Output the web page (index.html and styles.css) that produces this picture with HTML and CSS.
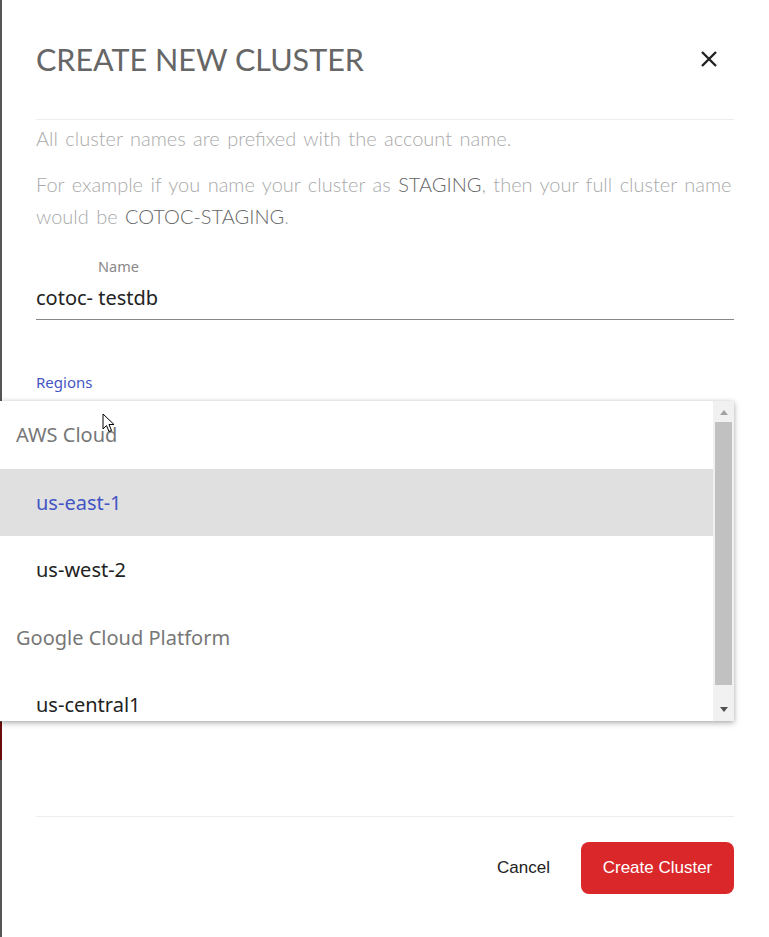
FILE: index.html
```html
<!DOCTYPE html>
<html lang="en">

<head>
    <meta charset="UTF-8">
    <meta name="viewport" content="width=device-width, initial-scale=1.0">
    <title>Create new cluster</title>
    <link rel="stylesheet" href="styles.css">
</head>

<body>
    <div class="modal">
        <!-- header -->
        <div class="modal-head">
            <h1 class="modal-title">CREATE NEW CLUSTER</h1>
            <span class="close">
                <svg width="18" height="18" viewBox="0 0 18 18">
                    <path d="M2 2 L16 16 M16 2 L2 16" stroke="#222" stroke-width="2.4" />
                </svg>
            </span>
        </div>

        <div class="intro">
            <p>All cluster names are prefixed with the account name.</p>
            <p>For example if you name your cluster as <span class="dark">STAGING</span>, then your full cluster name would be <span class="dark">COTOC-STAGING</span>.</p>
        </div>

        <div class="field">
            <label class="field-label">Name</label>
            <div class="field-value">cotoc- testdb</div>
        </div>

        <div class="regions">
            <label class="regions-label">Regions</label>
        </div>

        <div class="modal-foot">
            <button class="btn-cancel">Cancel</button>
            <button class="btn-create">Create Cluster</button>
        </div>
    </div>

    <!-- open region menu -->
    <div class="menu">
        <div class="menu-list">
            <div class="menu-group">AWS Cloud</div>
            <div class="menu-item selected">us-east-1</div>
            <div class="menu-item">us-west-2</div>
            <div class="menu-group">Google Cloud Platform</div>
            <div class="menu-item">us-central1</div>
        </div>
        <div class="scrollbar">
            <span class="arrow-up"></span>
            <span class="thumb"></span>
            <span class="arrow-down"></span>
        </div>
    </div>

    <svg class="cursor" width="13" height="20" viewBox="0 0 13 20">
        <path d="M1 1 L1 16 L4.5 12.5 L7 18.5 L9.5 17.5 L7 11.5 L12 11.5 Z" fill="#fff" stroke="#000" stroke-width="1" stroke-linejoin="round" />
    </svg>
</body>

</html>
```

FILE: styles.css
```css
* {
    margin: 0;
    padding: 0;
    box-sizing: border-box;
}

html {
    background: linear-gradient(to bottom, #555 0, #555 722px, #6b0d0d 722px, #6b0d0d 760px, #555 760px) no-repeat 0 0 / 2px 100%;
    background-color: #555;
    overflow: hidden;
}

body {
    margin-left: 2px;
    height: 937px;
    background-color: #fff;
    font-family: "Lato", "Noto Sans", sans-serif;
}

.modal {
    padding: 0 35px 0 34px;
}

.modal-head {
    height: 120px;
    display: flex;
    align-items: center;
    justify-content: space-between;
    border-bottom: 1px solid #eee;
    padding-bottom: 2px;
}

.modal-title {
    font-weight: 400;
    font-size: 30.5px;
    color: #666;
}

.close {
    display: flex;
    margin-right: 16px;
    cursor: pointer;
}

.intro {
    padding-top: 2px;
    color: #aaa;
    font-weight: 300;
    font-size: 20px;
    line-height: 32px;
    word-spacing: 2px;
}

.intro p {
    margin-bottom: 14px;
}

.intro .dark {
    color: #666;
}

.field {
    margin-top: 25px;
    border-bottom: 1px solid #888;
    padding-bottom: 6px;
}

.field-label {
    display: block;
    padding-left: 62px;
    font-family: "Noto Sans", sans-serif;
    font-size: 14.5px;
    color: #888;
    line-height: 18px;
}

.field-value {
    font-family: "Noto Sans", sans-serif;
    font-size: 20px;
    color: #222;
    line-height: 30px;
    margin-top: 8px;
}

.regions {
    margin-top: 52px;
    height: 444px;
}

.regions-label {
    font-family: "Noto Sans", sans-serif;
    font-size: 15px;
    color: #4355c5;
}

.modal-foot {
    border-top: 1px solid #eee;
    display: flex;
    justify-content: flex-end;
    align-items: center;
    gap: 31px;
    padding-top: 25px;
}

.modal-foot button {
    font-family: "Liberation Sans", Arial, sans-serif;
    font-size: 17px;
    border: none;
    cursor: pointer;
}

.btn-cancel {
    background: none;
    color: #222;
}

.btn-create {
    background-color: #d9272a;
    color: #fff;
    width: 153px;
    height: 52px;
    border-radius: 8px;
}

/* dropdown */
.menu {
    position: absolute;
    left: 0;
    top: 401px;
    width: 734px;
    height: 320px;
    background-color: #fff;
    box-shadow: 0 2px 6px rgba(0, 0, 0, 0.3), 0 0 4px rgba(0, 0, 0, 0.08);
    display: flex;
    overflow: hidden;
}

.menu-list {
    flex: 1;
    font-family: "Noto Sans", sans-serif;
    font-size: 20px;
}

.menu-group,
.menu-item {
    height: 67.5px;
    display: flex;
    align-items: center;
}

.menu-group {
    padding-left: 16px;
    color: #777;
}

.menu-item {
    padding-left: 36px;
    color: #222;
}

.menu-item.selected {
    background-color: #e0e0e0;
    color: #4355c5;
}

.scrollbar {
    width: 21px;
    background-color: #f1f1f1;
    display: flex;
    flex-direction: column;
    align-items: center;
    padding: 0 2px;
}

.thumb {
    width: 17px;
    height: 263px;
    background-color: #c1c1c1;
}

.arrow-up,
.arrow-down {
    width: 0;
    height: 0;
    border-left: 4px solid transparent;
    border-right: 4px solid transparent;
}

.arrow-up {
    border-bottom: 5px solid #a3a3a3;
    margin: 9px 0 7px;
}

.arrow-down {
    border-top: 5px solid #505050;
    margin-top: 22px;
}

.cursor {
    position: absolute;
    left: 102px;
    top: 413px;
}
```
